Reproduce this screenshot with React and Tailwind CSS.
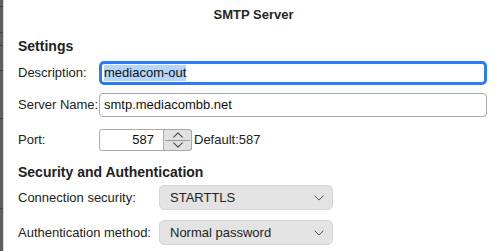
import React from 'react';

const Chevron = ({ up = false, className = '' }) => (
  <svg viewBox="0 0 12 7" className={className} fill="none" stroke="currentColor" strokeWidth="1.2" strokeLinecap="round" strokeLinejoin="round">
    <path d={up ? 'M1 6L6 1L11 6' : 'M1 1L6 6L11 1'} />
  </svg>
);

const Select = ({ value }) => (
  <div className="w-[174px] h-[25px] bg-[#e3e3e3] rounded-[5px] border border-[#d6d6d6] flex items-center justify-between pl-[10px] pr-[8px]">
    <span className="text-[13px] text-[#222]">{value}</span>
    <Chevron className="w-[10px] h-[6px] text-[#555]" />
  </div>
);

export default function App() {
  return (
    <div className="w-[504px] h-[251px] flex bg-white overflow-hidden" style={{ fontFamily: '"Liberation Sans", Arial, sans-serif' }}>
      {/* window behind the sheet */}
      <div className="w-[3px] h-full bg-[#5f5f5f] flex flex-col">
        <div className="h-[6px]" />
        <div className="h-px bg-[#3c3c3c]" />
        <div className="h-[25px]" />
        <div className="h-px bg-[#3c3c3c]" />
        <div className="h-[12px]" />
        <div className="h-px bg-[#3c3c3c]" />
        <div className="h-[24px]" />
        <div className="h-px bg-[#3c3c3c]" />
        <div className="h-[47px]" />
        <div className="h-px bg-[#3c3c3c]" />
        <div className="h-[89px]" />
        <div className="h-px bg-[#3c3c3c]" />
      </div>
      <div className="w-px h-full bg-[#d9d9d9]" />

      <div className="flex-1 flex flex-col text-[#222]">
        <div className="h-[30px] flex items-center justify-center text-[13px] font-bold text-[#262626] -ml-px">
          SMTP Server
        </div>

        <div className="pl-[14px] pr-[17px] flex flex-col">
          <div className="mt-[6px] h-[20px] leading-[20px] text-[14px] font-bold">Settings</div>

          <div className="mt-[5px] flex items-center h-[24px]">
            <div className="w-[81px] text-[13px]">Description:</div>
            <div className="flex-1 h-[24px] border-[3px] border-[#2d7cf6] rounded-[5px] flex items-center pl-[2px]">
              <span className="bg-[#b4d5fc] text-[13px] leading-[16px] text-[#111]">mediacom-out</span>
            </div>
          </div>

          <div className="mt-[8px] flex items-center h-[24px]">
            <div className="w-[81px] text-[13px]">Server Name:</div>
            <div className="flex-1 h-[24px] border border-[#a9a9a9] rounded-[4px] flex items-center pl-[4px]">
              <span className="text-[13px] text-[#111]">smtp.mediacombb.net</span>
            </div>
          </div>

          <div className="mt-[12px] flex items-center h-[22px]">
            <div className="w-[81px] text-[13px]">Port:</div>
            <div className="w-[65px] h-[22px] border border-[#a9a9a9] rounded-l-[3px] flex items-center justify-end pr-[9px]">
              <span className="text-[13px] text-[#111]">587</span>
            </div>
            <div className="w-[28px] h-[22px] bg-[#e1e1e1] border border-l-0 border-[#a9a9a9] rounded-r-[3px] flex flex-col">
              <div className="flex-1 flex items-center justify-center">
                <Chevron up className="w-[12px] h-[6px] text-[#444]" />
              </div>
              <div className="h-px bg-[#9a9a9a] mx-[1px]" />
              <div className="flex-1 flex items-center justify-center">
                <Chevron className="w-[12px] h-[6px] text-[#444]" />
              </div>
            </div>
            <span className="ml-[2px] text-[13px]">Default:587</span>
          </div>

          <div className="mt-[11px] h-[20px] leading-[20px] text-[14px] font-bold">Security and Authentication</div>

          <div className="mt-[3px] flex items-center h-[25px]">
            <div className="w-[141px] text-[13px]">Connection security:</div>
            <Select value="STARTTLS" />
          </div>

          <div className="mt-[10px] flex items-center h-[25px]">
            <div className="w-[141px] text-[13px]">Authentication method:</div>
            <Select value="Normal password" />
          </div>
        </div>
      </div>
    </div>
  );
}
